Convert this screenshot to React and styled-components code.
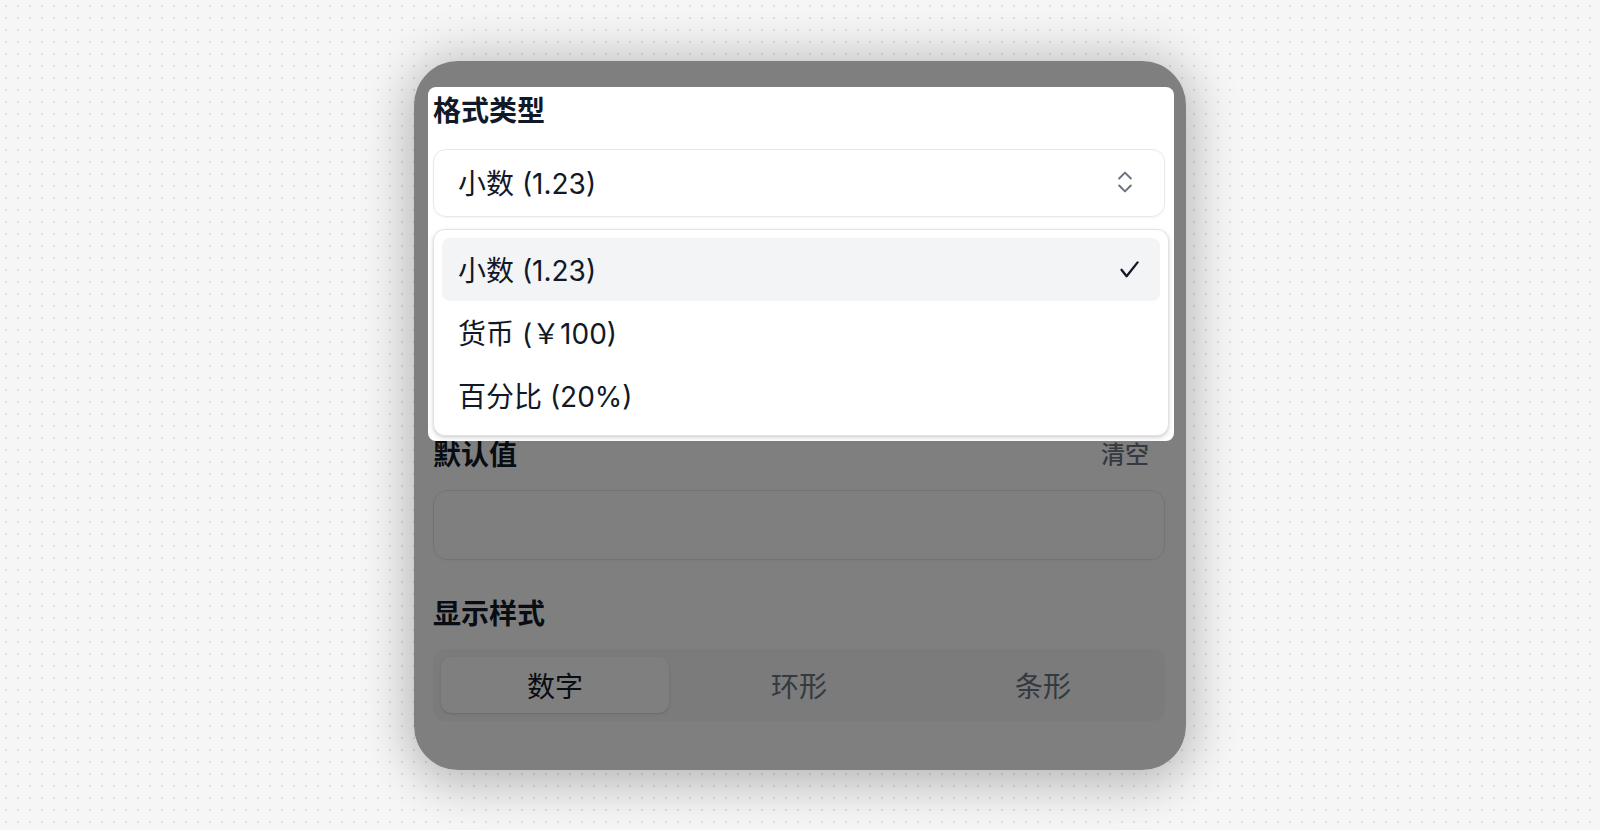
import React from 'react'
import styled, { createGlobalStyle } from 'styled-components'
import { ChevronsUpDown } from 'lucide-react'

const GlobalStyle = createGlobalStyle`
    body {
        margin: 0;
        background-color: #f6f6f6;
        background-image: radial-gradient(circle, #dedede 1px, transparent 1.4px);
        background-size: 12px 12px;
        font-family: Inter, "Noto Sans CJK SC", sans-serif;
    }
`

const options = [
    { label: '小数 (1.23)', selected: true },
    { label: '货币 (￥100)' },
    { label: '百分比 (20%)' },
]

const tabs = ['数字', '环形', '条形']

const App = () => (
    <Page>
        <GlobalStyle />
        <Card>
            <Spotlight>
                <Label>格式类型</Label>
                <SelectTrigger>
                    <span>小数 (1.23)</span>
                    <ChevronsUpDown size={28} strokeWidth={1.7} color="#6b7280" />
                </SelectTrigger>
                <Menu>
                    {options.map(opt => (
                        <Option key={opt.label} active={opt.selected}>
                            <span>{opt.label}</span>
                            {opt.selected && <CheckMark />}
                        </Option>
                    ))}
                </Menu>
            </Spotlight>

            <LabelRow>
                <Label lh={28}>默认值</Label>
                <ClearButton>清空</ClearButton>
            </LabelRow>
            <Input />

            <Label top={37} lh={34}>显示样式</Label>
            <Segmented>
                {tabs.map((t, i) => (
                    <Segment key={t} active={i === 0}>{t}</Segment>
                ))}
            </Segmented>

            <Overlay />
        </Card>
    </Page>
)

const CheckMark = () => (
    <svg width="19" height="17" viewBox="0 0 19 17" fill="none">
        <path d="M1.5 8.8 L6.6 15.2 L17.6 1.4" stroke="#111827" strokeWidth="2.3" strokeLinecap="round" strokeLinejoin="round" />
    </svg>
)

const Page = styled.div`
    min-height: 100vh;
    display: flex;
    align-items: center;
    justify-content: center;
`

const Card = styled.div`
    position: relative;
    width: 772px;
    box-sizing: border-box;
    padding: 26px 21px 49px 19px;
    background: #fff;
    border-radius: 44px;
    overflow: hidden;
    display: flex;
    flex-direction: column;
    box-shadow: 0 0 50px 6px rgba(0, 0, 0, 0.2), 0 20px 50px rgba(0, 0, 0, 0.1);
`

const Overlay = styled.div`
    position: absolute;
    inset: 0;
    background: rgba(0, 0, 0, 0.5);
    z-index: 1;
`

const Spotlight = styled.div`
    position: relative;
    z-index: 2;
    background: #fff;
    border-radius: 8px;
    margin: 0 -9px 0 -5px;
    padding: 4px 9px 5px 5px;
    display: flex;
    flex-direction: column;
`

const Label = styled.div`
    margin-top: ${p => p.top || 0}px;
    font-size: 28px;
    line-height: ${p => p.lh || 40}px;
    font-weight: 700;
    color: #111827;
`

const SelectTrigger = styled.div`
    margin-top: 18px;
    height: 68px;
    box-sizing: border-box;
    border: 1.5px solid #e7e8eb;
    border-radius: 13px;
    box-shadow: 0 1px 2px rgba(0, 0, 0, 0.05);
    padding: 0 25px 2px 24px;
    display: flex;
    align-items: center;
    justify-content: space-between;
    font-size: 28px;
    color: #111827;
`

const Menu = styled.div`
    margin: 12px -4px 0 0;
    border: 1px solid #e2e3e6;
    border-radius: 12px;
    padding: 8px;
    background: #fff;
    box-shadow: 0 2px 5px rgba(0, 0, 0, 0.14), 0 1px 2px rgba(0, 0, 0, 0.06);
    display: flex;
    flex-direction: column;
`

const Option = styled.div`
    height: 63px;
    box-sizing: border-box;
    padding: 0 21px 0 16px;
    border-radius: 8px;
    background: ${p => (p.active ? '#f3f4f6' : 'transparent')};
    display: flex;
    align-items: center;
    justify-content: space-between;
    font-size: 28px;
    color: #111827;
`

const LabelRow = styled.div`
    display: flex;
    align-items: center;
    justify-content: space-between;
`

const ClearButton = styled.button`
    border: none;
    background: none;
    padding: 0 16px;
    font-family: inherit;
    font-size: 24px;
    font-weight: 500;
    line-height: 28px;
    color: #6b7280;
`

const Input = styled.div`
    margin-top: 21px;
    height: 70px;
    box-sizing: border-box;
    border: 1.5px solid #e5e7eb;
    border-radius: 14px;
    box-shadow: 0 1px 2px rgba(0, 0, 0, 0.04);
`

const Segmented = styled.div`
    margin-top: 18px;
    padding: 8px;
    border-radius: 12px;
    background: #f6f6f7;
    display: grid;
    grid-template-columns: repeat(3, 1fr);
    gap: 16px;
`

const Segment = styled.div`
    height: 56px;
    border-radius: 10px;
    display: flex;
    align-items: center;
    justify-content: center;
    font-size: 28px;
    color: ${p => (p.active ? '#111827' : '#6b7280')};
    background: ${p => (p.active ? '#fff' : 'transparent')};
    box-shadow: ${p => (p.active ? '0 1px 3px rgba(0, 0, 0, 0.1), 0 1px 2px rgba(0, 0, 0, 0.06)' : 'none')};
`

export default App
